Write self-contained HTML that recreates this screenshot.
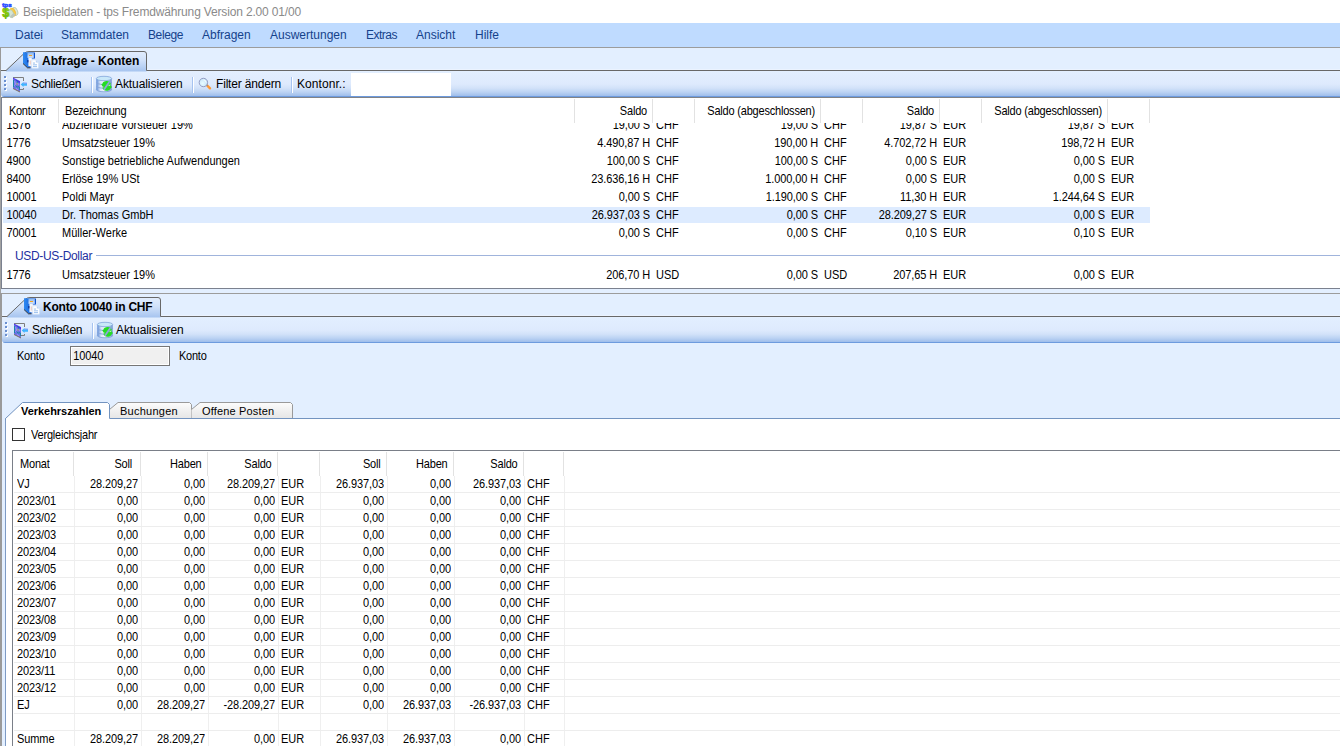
<!DOCTYPE html><html lang="de"><head><meta charset="utf-8"><title>Beispieldaten - tps Fremdwährung</title><style>
html,body{margin:0;padding:0}
body{width:1340px;height:746px;overflow:hidden;background:#fff;position:relative;font-family:"Liberation Sans",sans-serif;font-size:11px;color:#000}
div,span{position:absolute;white-space:nowrap;box-sizing:border-box}
svg{position:absolute;overflow:visible}
.t{line-height:14px;height:14px;transform-origin:0 11px;transform:scaleY(1.13)}
.ui{font-size:12px;line-height:16px;height:16px}
.tl{line-height:14px;height:14px}
.r{text-align:right}
.n{letter-spacing:-0.1px}
.menu{color:#15428b;font-size:12px;line-height:16px;top:27px}
.hs{width:1px;background:#e2e2e2}
.vl{width:1px;background:#efefef}
.hl{height:1px;background:#ededed}
.tsep{width:2px;height:16px;border-left:1px solid #a6c3f0;border-right:1px solid #fff}
</style></head><body>
<div class="ui" style="left:23px;top:4px;color:#8a8a8a;font-size:12px;letter-spacing:-0.16px">Beispieldaten - tps Fremdwährung Version 2.00 01/00</div>
<svg style="left:2px;top:2px" width="20" height="20" viewBox="0 0 20 20"><defs><linearGradient id="dg" x1="0" y1="0" x2="0" y2="1"><stop offset="0" stop-color="#b4ec10"/><stop offset="0.6" stop-color="#86cc06"/><stop offset="1" stop-color="#5aa408"/></linearGradient></defs><ellipse cx="12.800" cy="9.500" rx="2.800" ry="4.200" fill="#dfe9dc" stroke="#b4c8b2" stroke-width="0.8" transform="rotate(-20 12.8 9.5)"/><ellipse cx="10.600" cy="10.300" rx="2.800" ry="4.300" fill="#f7cb45" stroke="#eeb22e" stroke-width="0.6" transform="rotate(-20 10.6 10.3)"/><ellipse cx="9" cy="11.800" rx="2.600" ry="4.200" fill="#d3e4d3" stroke="#b0c8b0" stroke-width="0.6" transform="rotate(-20 9 11.8)"/><path d="M8 14.500 L10.500 16 L13.500 12.500 L11.500 11 Z" fill="#bcc6bc"/><text x="0.300" y="15.200" font-family="Liberation Sans, sans-serif" font-weight="bold" font-size="12.4" fill="url(#dg)" stroke="#78bc08" stroke-width="0.8">$</text><text x="0.300" y="4.600" font-family="Liberation Sans, sans-serif" font-weight="bold" font-size="6.2" fill="#2f55ff" stroke="#2f55ff" stroke-width="0.7">tps</text></svg>
<div style="left:0;top:23px;width:1340px;height:24px;background:#bfdbff"></div>
<div class="menu" style="left:15px;letter-spacing:0px">Datei</div>
<div class="menu" style="left:61px;letter-spacing:0px">Stammdaten</div>
<div class="menu" style="left:148px;letter-spacing:-0.38px">Belege</div>
<div class="menu" style="left:202px;letter-spacing:0px">Abfragen</div>
<div class="menu" style="left:270px;letter-spacing:0px">Auswertungen</div>
<div class="menu" style="left:366px;letter-spacing:-0.52px">Extras</div>
<div class="menu" style="left:416px;letter-spacing:0px">Ansicht</div>
<div class="menu" style="left:475px;letter-spacing:0px">Hilfe</div>
<div style="left:0;top:47px;width:1340px;height:1px;background:#9c9c9c"></div>
<div style="left:0;top:48px;width:1340px;height:22px;background:#e3efff"></div>
<div style="left:0;top:69px;width:1340px;height:1px;background:#ebf3ff"></div>
<div style="left:0;top:70px;width:1340px;height:1px;background:#686868"></div>
<div style="left:0;top:47px;width:1px;height:50px;background:#9a9a9a"></div>
<div style="left:1px;top:71px;width:1339px;height:26px;border-radius:0 0 0 3px;background:linear-gradient(#e3efff 0,#deeafd 50%,#d2e2f9 66%,#bcd3f3 81%,#a6c3ed 92%,#9fbeeb 96%,#6d9bde 96.2%,#6d9bde 100%)"></div>
<svg style="left:5px;top:51px" width="144" height="20" viewBox="0 0 144 20"><defs><linearGradient id="tg47" x1="0" y1="0" x2="0" y2="1"><stop offset="0" stop-color="#e2edfd"/><stop offset="0.45" stop-color="#d0e1fa"/><stop offset="1" stop-color="#a6c4ef"/></linearGradient></defs><path d="M1 19.5 L19 2.5 Q21 0.5 24 0.5 L139 0.5 Q141.5 0.5 141.5 3 L141.5 20.5 L1 20.5 Z" fill="url(#tg47)"/><path d="M1 19.5 L19 2.5 Q21 0.5 24 0.5 L139 0.5 Q141.5 0.5 141.5 3 L141.5 19.5" fill="none" stroke="#686868" stroke-width="1"/></svg>
<div class="ui" style="left:42px;top:53px;font-weight:bold;font-size:12px;letter-spacing:0px">Abfrage - Konten</div>
<svg style="left:23px;top:52px" width="17" height="17" viewBox="0 0 17 17"><defs><linearGradient id="cb47" x1="0" y1="0" x2="1" y2="0"><stop offset="0" stop-color="#2f8af2"/><stop offset="1" stop-color="#0b4fcf"/></linearGradient><linearGradient id="cf47" x1="0" y1="0" x2="0" y2="1"><stop offset="0" stop-color="#8db8ee"/><stop offset="1" stop-color="#dde9fb"/></linearGradient></defs><path d="M0 0.2 L12 0.5 L12 6.5 L7.5 6.5 L7.5 15.8 L4.5 15.8 L0 11.5 Z" fill="url(#cb47)"/><path d="M0 11.5 L4.5 15.8 L7.5 15.8" fill="none" stroke="#3a3a3a" stroke-width="1"/><rect x="4.5" y="0.8" width="6.3" height="5" fill="url(#cf47)"/><rect x="6" y="3" width="3" height="1" fill="#f2a324"/><rect x="5.4" y="5.8" width="3.4" height="8.4" fill="#f4f6fb"/><rect x="4.3" y="8" width="1.1" height="2.4" fill="#0a2a8a"/><rect x="6.8" y="8.5" width="1" height="4" fill="#ecc8bc"/><path d="M8.900 8 L12.800 8 L15.400 10.600 L15.400 16.200 L8.900 16.200 Z" fill="#fff" stroke="#d3e2f7" stroke-width="0.5"/><path d="M12.8 8 L12.8 10.5 L15.3 10.5 Z" fill="#b9d2f3"/><rect x="10" y="10.6" width="2" height="0.9" fill="#8fb8ec"/><rect x="10" y="12.4" width="4" height="0.9" fill="#8fb8ec"/><rect x="10" y="14.2" width="4" height="0.9" fill="#8fb8ec"/></svg>
<svg style="left:12px;top:76px" width="16" height="17" viewBox="0 0 16 17"><path d="M1 1.500 L11.500 1.500 L11.500 5 M11.500 12 L11.500 13.5 L8 13.5" fill="none" stroke="#7d7d7d" stroke-width="1"/><path d="M1 1.500 L8 5 L8 16 L1 12.5 Z" fill="#6a72e4"/><path d="M1 2 L8 5.500 L8 7 L5 5.500 L3 3.500 L1 3 Z" fill="#4a20f0"/><path d="M1.500 4 L1.500 11 M3 9 L5 11 L5 13 M5 4.500 L6 7 M5.500 10.500 L7.500 11 L7.500 14" fill="none" stroke="#0a8a9a" stroke-width="1" opacity="0.8"/><path d="M2.500 5 L3.500 8 L2.500 10 M6 7.500 L7 9 M4 12 L6 14" fill="none" stroke="#a08cff" stroke-width="1.2" opacity="0.9"/><rect x="4.300" y="7" width="1.400" height="1.600" fill="#b0a878"/><path d="M1 12.500 L8 16" fill="none" stroke="#7a6a50" stroke-width="0.9"/><path d="M8.700 8.500 L11.500 6 L11.500 7.400 L15 7.400 L15 9.700 L11.500 9.700 L11.500 11 Z" fill="#3fb4ff"/><path d="M11.500 7 L15 7.200" stroke="#5a7cf0" stroke-width="0.8"/></svg>
<svg style="left:96px;top:76px" width="17" height="17" viewBox="0 0 17 17"><defs><linearGradient id="cy47" x1="0" y1="0" x2="1" y2="0"><stop offset="0" stop-color="#5a8ad6"/><stop offset="0.25" stop-color="#d9e5f8"/><stop offset="0.5" stop-color="#eef3fc"/><stop offset="0.78" stop-color="#b4c9ec"/><stop offset="1" stop-color="#6a90d0"/></linearGradient></defs><path d="M0.300 2.500 L0.300 13.500 A7.700 2.300 0 0 0 15.700 13.500 L15.700 2.500 Z" fill="url(#cy47)"/><path d="M0.300 6.300 A7.700 2.200 0 0 0 15.700 6.300 M0.300 10 A7.700 2.200 0 0 0 15.700 10 M0.300 13.500 A7.700 2.300 0 0 0 15.700 13.500" fill="none" stroke="#86a4d8" stroke-width="0.9"/><ellipse cx="8" cy="2.500" rx="7.700" ry="2.200" fill="#c9e8f9" stroke="#83a6da" stroke-width="0.8"/><circle cx="10.600" cy="9.900" r="3" fill="#30d830"/><path d="M7.500 9.600 A3.100 3.100 0 0 1 13.600 8.900" fill="none" stroke="#25dc25" stroke-width="3"/><path d="M13.700 10.300 A3.100 3.100 0 0 1 7.700 11.300" fill="none" stroke="#25dc25" stroke-width="3"/><path d="M5.200 8.200 L9.200 7.600 L7.300 11.600 Z M16 11.600 L12 12.200 L13.900 8.200 Z" fill="#25dc25"/><path d="M7.900 13.700 L13.300 6.100" stroke="#8ca8da" stroke-width="1.800"/><path d="M12.600 9.600 L14.300 9" stroke="#dcfad4" stroke-width="0.9"/></svg>
<div style="left:4px;top:76px;width:2px;height:2px;background:#6a8fd0"></div>
<div style="left:5px;top:77px;width:2px;height:2px;background:#fff"></div>
<div style="left:5px;top:77px;width:1px;height:1px;background:#6a8fd0"></div>
<div style="left:4px;top:80px;width:2px;height:2px;background:#6a8fd0"></div>
<div style="left:5px;top:81px;width:2px;height:2px;background:#fff"></div>
<div style="left:5px;top:81px;width:1px;height:1px;background:#6a8fd0"></div>
<div style="left:4px;top:84px;width:2px;height:2px;background:#6a8fd0"></div>
<div style="left:5px;top:85px;width:2px;height:2px;background:#fff"></div>
<div style="left:5px;top:85px;width:1px;height:1px;background:#6a8fd0"></div>
<div style="left:4px;top:88px;width:2px;height:2px;background:#6a8fd0"></div>
<div style="left:5px;top:89px;width:2px;height:2px;background:#fff"></div>
<div style="left:5px;top:89px;width:1px;height:1px;background:#6a8fd0"></div>
<div class="ui" style="left:31px;top:76px;font-size:12px;letter-spacing:-0.36px">Schließen</div>
<div class="tsep" style="left:91px;top:77px"></div>
<div class="ui" style="left:115px;top:76px;font-size:12px;letter-spacing:-0.08px">Aktualisieren</div>
<svg style="left:198px;top:77px" width="15" height="14" viewBox="0 0 15 14"><defs><radialGradient id="lens" cx="0.4" cy="0.6" r="0.7"><stop offset="0" stop-color="#e8fbff"/><stop offset="1" stop-color="#bfe0f8"/></radialGradient></defs><path d="M9.300 8.600 L12 11.300" stroke="#ff9a36" stroke-width="2.400" stroke-linecap="round"/><path d="M8 7.300 L9.500 8.800" stroke="#8a8a90" stroke-width="1.300"/><circle cx="5.400" cy="5.500" r="4.200" fill="url(#lens)" stroke="#8c94bc" stroke-width="0.9"/><path d="M5.500 2.800 Q8 3 8 5.500" fill="none" stroke="#fff" stroke-width="1" opacity="0.8"/></svg>
<div class="tsep" style="left:192px;top:77px"></div>
<div class="ui" style="left:216px;top:76px;font-size:12px;letter-spacing:-0.18px">Filter ändern</div>
<div class="tsep" style="left:291px;top:77px"></div>
<div class="ui" style="left:297px;top:76px;font-size:12px;letter-spacing:0.07px">Kontonr.:</div>
<div style="left:351px;top:73px;width:100px;height:23px;background:#fff"></div>
<div style="left:0;top:97px;width:1340px;height:1px;background:#808286"></div>
<div style="left:0;top:97px;width:1px;height:196px;background:#a2a2a2"></div>
<div style="left:1px;top:97px;width:1px;height:192px;background:#7b818f"></div>
<div style="left:1px;top:288px;width:1339px;height:1px;background:#7b818f"></div>
<div style="left:1px;top:289px;width:1339px;height:4px;background:#e3efff"></div>
<div style="left:3px;top:207px;width:1147px;height:16px;background:#ddebff"></div>
<div class="t n" style="left:6.5px;top:118px">1576</div>
<div class="t" style="left:62px;top:118px">Abziehbare Vorsteuer 19%</div>
<div class="t r n" style="left:560px;width:90px;top:118px">19,00 S</div>
<div class="t" style="left:656px;top:118px">CHF</div>
<div class="t r n" style="left:728px;width:90px;top:118px">19,00 S</div>
<div class="t" style="left:824px;top:118px">CHF</div>
<div class="t r n" style="left:847px;width:90px;top:118px">19,87 S</div>
<div class="t" style="left:943px;top:118px">EUR</div>
<div class="t r n" style="left:1015px;width:90px;top:118px">19,87 S</div>
<div class="t" style="left:1111px;top:118px">EUR</div>
<div class="t n" style="left:6.5px;top:136px">1776</div>
<div class="t" style="left:62px;top:136px">Umsatzsteuer 19%</div>
<div class="t r n" style="left:560px;width:90px;top:136px">4.490,87 H</div>
<div class="t" style="left:656px;top:136px">CHF</div>
<div class="t r n" style="left:728px;width:90px;top:136px">190,00 H</div>
<div class="t" style="left:824px;top:136px">CHF</div>
<div class="t r n" style="left:847px;width:90px;top:136px">4.702,72 H</div>
<div class="t" style="left:943px;top:136px">EUR</div>
<div class="t r n" style="left:1015px;width:90px;top:136px">198,72 H</div>
<div class="t" style="left:1111px;top:136px">EUR</div>
<div class="t n" style="left:6.5px;top:154px">4900</div>
<div class="t" style="left:62px;top:154px">Sonstige betriebliche Aufwendungen</div>
<div class="t r n" style="left:560px;width:90px;top:154px">100,00 S</div>
<div class="t" style="left:656px;top:154px">CHF</div>
<div class="t r n" style="left:728px;width:90px;top:154px">100,00 S</div>
<div class="t" style="left:824px;top:154px">CHF</div>
<div class="t r n" style="left:847px;width:90px;top:154px">0,00 S</div>
<div class="t" style="left:943px;top:154px">EUR</div>
<div class="t r n" style="left:1015px;width:90px;top:154px">0,00 S</div>
<div class="t" style="left:1111px;top:154px">EUR</div>
<div class="t n" style="left:6.5px;top:172px">8400</div>
<div class="t" style="left:62px;top:172px">Erlöse 19% USt</div>
<div class="t r n" style="left:560px;width:90px;top:172px">23.636,16 H</div>
<div class="t" style="left:656px;top:172px">CHF</div>
<div class="t r n" style="left:728px;width:90px;top:172px">1.000,00 H</div>
<div class="t" style="left:824px;top:172px">CHF</div>
<div class="t r n" style="left:847px;width:90px;top:172px">0,00 S</div>
<div class="t" style="left:943px;top:172px">EUR</div>
<div class="t r n" style="left:1015px;width:90px;top:172px">0,00 S</div>
<div class="t" style="left:1111px;top:172px">EUR</div>
<div class="t n" style="left:6.5px;top:190px">10001</div>
<div class="t" style="left:62px;top:190px">Poldi Mayr</div>
<div class="t r n" style="left:560px;width:90px;top:190px">0,00 S</div>
<div class="t" style="left:656px;top:190px">CHF</div>
<div class="t r n" style="left:728px;width:90px;top:190px">1.190,00 S</div>
<div class="t" style="left:824px;top:190px">CHF</div>
<div class="t r n" style="left:847px;width:90px;top:190px">11,30 H</div>
<div class="t" style="left:943px;top:190px">EUR</div>
<div class="t r n" style="left:1015px;width:90px;top:190px">1.244,64 S</div>
<div class="t" style="left:1111px;top:190px">EUR</div>
<div class="t n" style="left:6.5px;top:208px">10040</div>
<div class="t" style="left:62px;top:208px">Dr. Thomas GmbH</div>
<div class="t r n" style="left:560px;width:90px;top:208px">26.937,03 S</div>
<div class="t" style="left:656px;top:208px">CHF</div>
<div class="t r n" style="left:728px;width:90px;top:208px">0,00 S</div>
<div class="t" style="left:824px;top:208px">CHF</div>
<div class="t r n" style="left:847px;width:90px;top:208px">28.209,27 S</div>
<div class="t" style="left:943px;top:208px">EUR</div>
<div class="t r n" style="left:1015px;width:90px;top:208px">0,00 S</div>
<div class="t" style="left:1111px;top:208px">EUR</div>
<div class="t n" style="left:6.5px;top:226px">70001</div>
<div class="t" style="left:62px;top:226px">Müller-Werke</div>
<div class="t r n" style="left:560px;width:90px;top:226px">0,00 S</div>
<div class="t" style="left:656px;top:226px">CHF</div>
<div class="t r n" style="left:728px;width:90px;top:226px">0,00 S</div>
<div class="t" style="left:824px;top:226px">CHF</div>
<div class="t r n" style="left:847px;width:90px;top:226px">0,10 S</div>
<div class="t" style="left:943px;top:226px">EUR</div>
<div class="t r n" style="left:1015px;width:90px;top:226px">0,10 S</div>
<div class="t" style="left:1111px;top:226px">EUR</div>
<div style="left:2px;top:98px;width:1338px;height:25px;background:#fff"></div>
<div class="hs" style="left:58px;top:99px;height:24px"></div>
<div class="hs" style="left:574px;top:99px;height:24px"></div>
<div class="hs" style="left:652px;top:99px;height:24px"></div>
<div class="hs" style="left:694px;top:99px;height:24px"></div>
<div class="hs" style="left:820px;top:99px;height:24px"></div>
<div class="hs" style="left:862px;top:99px;height:24px"></div>
<div class="hs" style="left:939px;top:99px;height:24px"></div>
<div class="hs" style="left:981px;top:99px;height:24px"></div>
<div class="hs" style="left:1107px;top:99px;height:24px"></div>
<div class="hs" style="left:1149px;top:99px;height:24px"></div>
<div class="t" style="left:9px;top:104px;letter-spacing:-0.3px">Kontonr</div>
<div class="t" style="left:65px;top:104px;letter-spacing:-0.2px">Bezeichnung</div>
<div class="t r" style="left:527px;width:120px;top:104px;letter-spacing:-0.2px">Saldo</div>
<div class="t r" style="left:695px;width:120px;top:104px;letter-spacing:-0.2px">Saldo (abgeschlossen)</div>
<div class="t r" style="left:814px;width:120px;top:104px;letter-spacing:-0.2px">Saldo</div>
<div class="t r" style="left:982px;width:120px;top:104px;letter-spacing:-0.2px">Saldo (abgeschlossen)</div>
<div class="ui" style="left:15px;top:248px;color:#1e30a0;font-size:12px;letter-spacing:-0.33px">USD-US-Dollar</div>
<div style="left:96px;top:255px;width:1244px;height:1px;background:#a0b4dc"></div>
<div class="t n" style="left:6.5px;top:268px">1776</div>
<div class="t" style="left:62px;top:268px">Umsatzsteuer 19%</div>
<div class="t r n" style="left:560px;width:90px;top:268px">206,70 H</div>
<div class="t" style="left:656px;top:268px">USD</div>
<div class="t r n" style="left:728px;width:90px;top:268px">0,00 S</div>
<div class="t" style="left:824px;top:268px">USD</div>
<div class="t r n" style="left:847px;width:90px;top:268px">207,65 H</div>
<div class="t" style="left:943px;top:268px">EUR</div>
<div class="t r n" style="left:1015px;width:90px;top:268px">0,00 S</div>
<div class="t" style="left:1111px;top:268px">EUR</div>
<div style="left:0;top:293px;width:1340px;height:1px;background:#9c9c9c"></div>
<div style="left:0;top:294px;width:1340px;height:22px;background:#e3efff"></div>
<div style="left:0;top:315px;width:1340px;height:1px;background:#ebf3ff"></div>
<div style="left:0;top:316px;width:1340px;height:1px;background:#686868"></div>
<div style="left:0;top:293px;width:2px;height:50px;background:#9a9a9a"></div>
<div style="left:2px;top:317px;width:1339px;height:26px;border-radius:0 0 0 3px;background:linear-gradient(#e3efff 0,#deeafd 50%,#d2e2f9 66%,#bcd3f3 81%,#a6c3ed 92%,#9fbeeb 96%,#6d9bde 96.2%,#6d9bde 100%)"></div>
<svg style="left:6px;top:297px" width="157" height="20" viewBox="0 0 157 20"><defs><linearGradient id="tg293" x1="0" y1="0" x2="0" y2="1"><stop offset="0" stop-color="#e2edfd"/><stop offset="0.45" stop-color="#d0e1fa"/><stop offset="1" stop-color="#a6c4ef"/></linearGradient></defs><path d="M1 19.5 L19 2.5 Q21 0.5 24 0.5 L152 0.5 Q154.5 0.5 154.5 3 L154.5 20.5 L1 20.5 Z" fill="url(#tg293)"/><path d="M1 19.5 L19 2.5 Q21 0.5 24 0.5 L152 0.5 Q154.5 0.5 154.5 3 L154.5 19.5" fill="none" stroke="#686868" stroke-width="1"/></svg>
<div class="ui" style="left:43px;top:299px;font-weight:bold;font-size:12px;letter-spacing:-0.22px">Konto 10040 in CHF</div>
<svg style="left:24px;top:298px" width="17" height="17" viewBox="0 0 17 17"><defs><linearGradient id="cb293" x1="0" y1="0" x2="1" y2="0"><stop offset="0" stop-color="#2f8af2"/><stop offset="1" stop-color="#0b4fcf"/></linearGradient><linearGradient id="cf293" x1="0" y1="0" x2="0" y2="1"><stop offset="0" stop-color="#8db8ee"/><stop offset="1" stop-color="#dde9fb"/></linearGradient></defs><path d="M0 0.2 L12 0.5 L12 6.5 L7.5 6.5 L7.5 15.8 L4.5 15.8 L0 11.5 Z" fill="url(#cb293)"/><path d="M0 11.5 L4.5 15.8 L7.5 15.8" fill="none" stroke="#3a3a3a" stroke-width="1"/><rect x="4.5" y="0.8" width="6.3" height="5" fill="url(#cf293)"/><rect x="6" y="3" width="3" height="1" fill="#f2a324"/><rect x="5.4" y="5.8" width="3.4" height="8.4" fill="#f4f6fb"/><rect x="4.3" y="8" width="1.1" height="2.4" fill="#0a2a8a"/><rect x="6.8" y="8.5" width="1" height="4" fill="#ecc8bc"/><path d="M8.900 8 L12.800 8 L15.400 10.600 L15.400 16.200 L8.900 16.200 Z" fill="#fff" stroke="#d3e2f7" stroke-width="0.5"/><path d="M12.8 8 L12.8 10.5 L15.3 10.5 Z" fill="#b9d2f3"/><rect x="10" y="10.6" width="2" height="0.9" fill="#8fb8ec"/><rect x="10" y="12.4" width="4" height="0.9" fill="#8fb8ec"/><rect x="10" y="14.2" width="4" height="0.9" fill="#8fb8ec"/></svg>
<svg style="left:13px;top:322px" width="16" height="17" viewBox="0 0 16 17"><path d="M1 1.500 L11.500 1.500 L11.500 5 M11.500 12 L11.500 13.5 L8 13.5" fill="none" stroke="#7d7d7d" stroke-width="1"/><path d="M1 1.500 L8 5 L8 16 L1 12.5 Z" fill="#6a72e4"/><path d="M1 2 L8 5.500 L8 7 L5 5.500 L3 3.500 L1 3 Z" fill="#4a20f0"/><path d="M1.500 4 L1.500 11 M3 9 L5 11 L5 13 M5 4.500 L6 7 M5.500 10.500 L7.500 11 L7.500 14" fill="none" stroke="#0a8a9a" stroke-width="1" opacity="0.8"/><path d="M2.500 5 L3.500 8 L2.500 10 M6 7.500 L7 9 M4 12 L6 14" fill="none" stroke="#a08cff" stroke-width="1.2" opacity="0.9"/><rect x="4.300" y="7" width="1.400" height="1.600" fill="#b0a878"/><path d="M1 12.500 L8 16" fill="none" stroke="#7a6a50" stroke-width="0.9"/><path d="M8.700 8.500 L11.500 6 L11.500 7.400 L15 7.400 L15 9.700 L11.500 9.700 L11.500 11 Z" fill="#3fb4ff"/><path d="M11.500 7 L15 7.200" stroke="#5a7cf0" stroke-width="0.8"/></svg>
<svg style="left:97px;top:322px" width="17" height="17" viewBox="0 0 17 17"><defs><linearGradient id="cy293" x1="0" y1="0" x2="1" y2="0"><stop offset="0" stop-color="#5a8ad6"/><stop offset="0.25" stop-color="#d9e5f8"/><stop offset="0.5" stop-color="#eef3fc"/><stop offset="0.78" stop-color="#b4c9ec"/><stop offset="1" stop-color="#6a90d0"/></linearGradient></defs><path d="M0.300 2.500 L0.300 13.500 A7.700 2.300 0 0 0 15.700 13.500 L15.700 2.500 Z" fill="url(#cy293)"/><path d="M0.300 6.300 A7.700 2.200 0 0 0 15.700 6.300 M0.300 10 A7.700 2.200 0 0 0 15.700 10 M0.300 13.500 A7.700 2.300 0 0 0 15.700 13.500" fill="none" stroke="#86a4d8" stroke-width="0.9"/><ellipse cx="8" cy="2.500" rx="7.700" ry="2.200" fill="#c9e8f9" stroke="#83a6da" stroke-width="0.8"/><circle cx="10.600" cy="9.900" r="3" fill="#30d830"/><path d="M7.500 9.600 A3.100 3.100 0 0 1 13.600 8.900" fill="none" stroke="#25dc25" stroke-width="3"/><path d="M13.700 10.300 A3.100 3.100 0 0 1 7.700 11.300" fill="none" stroke="#25dc25" stroke-width="3"/><path d="M5.200 8.200 L9.200 7.600 L7.300 11.600 Z M16 11.600 L12 12.200 L13.900 8.200 Z" fill="#25dc25"/><path d="M7.900 13.700 L13.300 6.100" stroke="#8ca8da" stroke-width="1.800"/><path d="M12.600 9.600 L14.300 9" stroke="#dcfad4" stroke-width="0.9"/></svg>
<div style="left:5px;top:322px;width:2px;height:2px;background:#6a8fd0"></div>
<div style="left:6px;top:323px;width:2px;height:2px;background:#fff"></div>
<div style="left:6px;top:323px;width:1px;height:1px;background:#6a8fd0"></div>
<div style="left:5px;top:326px;width:2px;height:2px;background:#6a8fd0"></div>
<div style="left:6px;top:327px;width:2px;height:2px;background:#fff"></div>
<div style="left:6px;top:327px;width:1px;height:1px;background:#6a8fd0"></div>
<div style="left:5px;top:330px;width:2px;height:2px;background:#6a8fd0"></div>
<div style="left:6px;top:331px;width:2px;height:2px;background:#fff"></div>
<div style="left:6px;top:331px;width:1px;height:1px;background:#6a8fd0"></div>
<div style="left:5px;top:334px;width:2px;height:2px;background:#6a8fd0"></div>
<div style="left:6px;top:335px;width:2px;height:2px;background:#fff"></div>
<div style="left:6px;top:335px;width:1px;height:1px;background:#6a8fd0"></div>
<div class="ui" style="left:32px;top:322px;font-size:12px;letter-spacing:-0.36px">Schließen</div>
<div class="tsep" style="left:92px;top:323px"></div>
<div class="ui" style="left:116px;top:322px;font-size:12px;letter-spacing:-0.08px">Aktualisieren</div>
<div style="left:0;top:317px;width:2px;height:429px;background:#9a9a9a"></div>
<div style="left:2px;top:343px;width:1338px;height:403px;background:#e3efff"></div>
<div class="t" style="left:17px;top:349px;letter-spacing:-0.25px">Konto</div>
<div style="left:70px;top:346px;width:100px;height:20px;background:#f0f0f0;border:1px solid #767676;box-shadow:inset 0 0 0 1px #fff"></div>
<div class="t" style="left:73.3px;top:349px;letter-spacing:-0.1px">10040</div>
<div class="t" style="left:179px;top:349px;letter-spacing:-0.25px">Konto</div>
<div style="left:5px;top:418px;width:1335px;height:328px;background:#fff;border-left:1px solid #7d9ac4;border-top:1px solid #7394c0"></div>
<svg style="left:5px;top:401px" width="290" height="19" viewBox="0 0 290 19"><defs><linearGradient id="ig" x1="0" y1="0" x2="0" y2="1"><stop offset="0" stop-color="#fcfcfc"/><stop offset="1" stop-color="#e6e6e6"/></linearGradient></defs><path d="M104.5 17 L104.5 8.500 L113 1.500 L184.5 1.500 L186.5 3.500 L186.5 17 Z" fill="url(#ig)"/><path d="M104.5 8.500 L113 1.500 L184.5 1.500 L186.5 3.500 L186.5 17" fill="none" stroke="#9a9a9a"/><path d="M186.5 17 L186.5 8.500 L195 1.500 L285.5 1.500 L287.5 3.500 L287.5 17 Z" fill="url(#ig)"/><path d="M186.5 8.500 L195 1.500 L285.5 1.500 L287.5 3.500 L287.5 17" fill="none" stroke="#9a9a9a"/><path d="M0.5 19 L0.5 17.5 L17.5 1.500 L102.5 1.500 L104.5 3.500 L104.5 19 Z" fill="#fff"/><path d="M0.5 19 L0.5 17.5 L17.5 1.500 L102.5 1.500 L104.5 3.500 L104.5 17.5" fill="none" stroke="#7394c0"/></svg>
<div class="tl" style="left:21px;top:404px;font-weight:bold;font-size:11px;letter-spacing:-0.04px">Verkehrszahlen</div>
<div class="tl" style="left:120px;top:404px;font-size:11px;letter-spacing:0.26px">Buchungen</div>
<div class="tl" style="left:202px;top:404px;font-size:11px;letter-spacing:0.17px">Offene Posten</div>
<div style="left:12px;top:428px;width:13px;height:13px;background:#fff;border:1px solid #333"></div>
<div class="t" style="left:31px;top:428px;letter-spacing:-0.2px">Vergleichsjahr</div>
<div style="left:12px;top:450px;width:1328px;height:296px;background:#fff;border-left:1px solid #7a7f88;border-top:1px solid #7a7f88"></div>
<div class="hs" style="left:73px;top:452px;height:24px"></div>
<div class="vl" style="left:74px;top:476px;height:270px"></div>
<div class="hs" style="left:140px;top:452px;height:24px"></div>
<div class="vl" style="left:141px;top:476px;height:270px"></div>
<div class="hs" style="left:207px;top:452px;height:24px"></div>
<div class="vl" style="left:208px;top:476px;height:270px"></div>
<div class="hs" style="left:277px;top:452px;height:24px"></div>
<div class="vl" style="left:278px;top:476px;height:270px"></div>
<div class="hs" style="left:319px;top:452px;height:24px"></div>
<div class="vl" style="left:320px;top:476px;height:270px"></div>
<div class="hs" style="left:386px;top:452px;height:24px"></div>
<div class="vl" style="left:387px;top:476px;height:270px"></div>
<div class="hs" style="left:453px;top:452px;height:24px"></div>
<div class="vl" style="left:454px;top:476px;height:270px"></div>
<div class="hs" style="left:523px;top:452px;height:24px"></div>
<div class="vl" style="left:524px;top:476px;height:270px"></div>
<div class="hs" style="left:563px;top:452px;height:24px"></div>
<div class="vl" style="left:564px;top:476px;height:270px"></div>
<div class="hl" style="left:14px;top:492px;width:1326px"></div>
<div class="hl" style="left:14px;top:509px;width:1326px"></div>
<div class="hl" style="left:14px;top:526px;width:1326px"></div>
<div class="hl" style="left:14px;top:543px;width:1326px"></div>
<div class="hl" style="left:14px;top:560px;width:1326px"></div>
<div class="hl" style="left:14px;top:577px;width:1326px"></div>
<div class="hl" style="left:14px;top:594px;width:1326px"></div>
<div class="hl" style="left:14px;top:611px;width:1326px"></div>
<div class="hl" style="left:14px;top:628px;width:1326px"></div>
<div class="hl" style="left:14px;top:645px;width:1326px"></div>
<div class="hl" style="left:14px;top:662px;width:1326px"></div>
<div class="hl" style="left:14px;top:679px;width:1326px"></div>
<div class="hl" style="left:14px;top:696px;width:1326px"></div>
<div class="hl" style="left:14px;top:713px;width:1326px"></div>
<div class="hl" style="left:14px;top:730px;width:1326px"></div>
<div class="t" style="left:20px;top:457px;letter-spacing:-0.2px">Monat</div>
<div class="t r" style="left:72px;width:60px;top:457px;letter-spacing:-0.2px">Soll</div>
<div class="t r" style="left:141.5px;width:60px;top:457px;letter-spacing:-0.2px">Haben</div>
<div class="t r" style="left:211.5px;width:60px;top:457px;letter-spacing:-0.2px">Saldo</div>
<div class="t r" style="left:320.5px;width:60px;top:457px;letter-spacing:-0.2px">Soll</div>
<div class="t r" style="left:387.5px;width:60px;top:457px;letter-spacing:-0.2px">Haben</div>
<div class="t r" style="left:457.5px;width:60px;top:457px;letter-spacing:-0.2px">Saldo</div>
<div class="t n" style="left:17px;top:477px">VJ</div>
<div class="t r n" style="left:68px;width:70px;top:477px">28.209,27</div>
<div class="t r n" style="left:135px;width:70px;top:477px">0,00</div>
<div class="t r n" style="left:205px;width:70px;top:477px">28.209,27</div>
<div class="t r n" style="left:314px;width:70px;top:477px">26.937,03</div>
<div class="t r n" style="left:381px;width:70px;top:477px">0,00</div>
<div class="t r n" style="left:451px;width:70px;top:477px">26.937,03</div>
<div class="t" style="left:281px;top:477px">EUR</div>
<div class="t" style="left:527px;top:477px">CHF</div>
<div class="t n" style="left:17px;top:494px">2023/01</div>
<div class="t r n" style="left:68px;width:70px;top:494px">0,00</div>
<div class="t r n" style="left:135px;width:70px;top:494px">0,00</div>
<div class="t r n" style="left:205px;width:70px;top:494px">0,00</div>
<div class="t r n" style="left:314px;width:70px;top:494px">0,00</div>
<div class="t r n" style="left:381px;width:70px;top:494px">0,00</div>
<div class="t r n" style="left:451px;width:70px;top:494px">0,00</div>
<div class="t" style="left:281px;top:494px">EUR</div>
<div class="t" style="left:527px;top:494px">CHF</div>
<div class="t n" style="left:17px;top:511px">2023/02</div>
<div class="t r n" style="left:68px;width:70px;top:511px">0,00</div>
<div class="t r n" style="left:135px;width:70px;top:511px">0,00</div>
<div class="t r n" style="left:205px;width:70px;top:511px">0,00</div>
<div class="t r n" style="left:314px;width:70px;top:511px">0,00</div>
<div class="t r n" style="left:381px;width:70px;top:511px">0,00</div>
<div class="t r n" style="left:451px;width:70px;top:511px">0,00</div>
<div class="t" style="left:281px;top:511px">EUR</div>
<div class="t" style="left:527px;top:511px">CHF</div>
<div class="t n" style="left:17px;top:528px">2023/03</div>
<div class="t r n" style="left:68px;width:70px;top:528px">0,00</div>
<div class="t r n" style="left:135px;width:70px;top:528px">0,00</div>
<div class="t r n" style="left:205px;width:70px;top:528px">0,00</div>
<div class="t r n" style="left:314px;width:70px;top:528px">0,00</div>
<div class="t r n" style="left:381px;width:70px;top:528px">0,00</div>
<div class="t r n" style="left:451px;width:70px;top:528px">0,00</div>
<div class="t" style="left:281px;top:528px">EUR</div>
<div class="t" style="left:527px;top:528px">CHF</div>
<div class="t n" style="left:17px;top:545px">2023/04</div>
<div class="t r n" style="left:68px;width:70px;top:545px">0,00</div>
<div class="t r n" style="left:135px;width:70px;top:545px">0,00</div>
<div class="t r n" style="left:205px;width:70px;top:545px">0,00</div>
<div class="t r n" style="left:314px;width:70px;top:545px">0,00</div>
<div class="t r n" style="left:381px;width:70px;top:545px">0,00</div>
<div class="t r n" style="left:451px;width:70px;top:545px">0,00</div>
<div class="t" style="left:281px;top:545px">EUR</div>
<div class="t" style="left:527px;top:545px">CHF</div>
<div class="t n" style="left:17px;top:562px">2023/05</div>
<div class="t r n" style="left:68px;width:70px;top:562px">0,00</div>
<div class="t r n" style="left:135px;width:70px;top:562px">0,00</div>
<div class="t r n" style="left:205px;width:70px;top:562px">0,00</div>
<div class="t r n" style="left:314px;width:70px;top:562px">0,00</div>
<div class="t r n" style="left:381px;width:70px;top:562px">0,00</div>
<div class="t r n" style="left:451px;width:70px;top:562px">0,00</div>
<div class="t" style="left:281px;top:562px">EUR</div>
<div class="t" style="left:527px;top:562px">CHF</div>
<div class="t n" style="left:17px;top:579px">2023/06</div>
<div class="t r n" style="left:68px;width:70px;top:579px">0,00</div>
<div class="t r n" style="left:135px;width:70px;top:579px">0,00</div>
<div class="t r n" style="left:205px;width:70px;top:579px">0,00</div>
<div class="t r n" style="left:314px;width:70px;top:579px">0,00</div>
<div class="t r n" style="left:381px;width:70px;top:579px">0,00</div>
<div class="t r n" style="left:451px;width:70px;top:579px">0,00</div>
<div class="t" style="left:281px;top:579px">EUR</div>
<div class="t" style="left:527px;top:579px">CHF</div>
<div class="t n" style="left:17px;top:596px">2023/07</div>
<div class="t r n" style="left:68px;width:70px;top:596px">0,00</div>
<div class="t r n" style="left:135px;width:70px;top:596px">0,00</div>
<div class="t r n" style="left:205px;width:70px;top:596px">0,00</div>
<div class="t r n" style="left:314px;width:70px;top:596px">0,00</div>
<div class="t r n" style="left:381px;width:70px;top:596px">0,00</div>
<div class="t r n" style="left:451px;width:70px;top:596px">0,00</div>
<div class="t" style="left:281px;top:596px">EUR</div>
<div class="t" style="left:527px;top:596px">CHF</div>
<div class="t n" style="left:17px;top:613px">2023/08</div>
<div class="t r n" style="left:68px;width:70px;top:613px">0,00</div>
<div class="t r n" style="left:135px;width:70px;top:613px">0,00</div>
<div class="t r n" style="left:205px;width:70px;top:613px">0,00</div>
<div class="t r n" style="left:314px;width:70px;top:613px">0,00</div>
<div class="t r n" style="left:381px;width:70px;top:613px">0,00</div>
<div class="t r n" style="left:451px;width:70px;top:613px">0,00</div>
<div class="t" style="left:281px;top:613px">EUR</div>
<div class="t" style="left:527px;top:613px">CHF</div>
<div class="t n" style="left:17px;top:630px">2023/09</div>
<div class="t r n" style="left:68px;width:70px;top:630px">0,00</div>
<div class="t r n" style="left:135px;width:70px;top:630px">0,00</div>
<div class="t r n" style="left:205px;width:70px;top:630px">0,00</div>
<div class="t r n" style="left:314px;width:70px;top:630px">0,00</div>
<div class="t r n" style="left:381px;width:70px;top:630px">0,00</div>
<div class="t r n" style="left:451px;width:70px;top:630px">0,00</div>
<div class="t" style="left:281px;top:630px">EUR</div>
<div class="t" style="left:527px;top:630px">CHF</div>
<div class="t n" style="left:17px;top:647px">2023/10</div>
<div class="t r n" style="left:68px;width:70px;top:647px">0,00</div>
<div class="t r n" style="left:135px;width:70px;top:647px">0,00</div>
<div class="t r n" style="left:205px;width:70px;top:647px">0,00</div>
<div class="t r n" style="left:314px;width:70px;top:647px">0,00</div>
<div class="t r n" style="left:381px;width:70px;top:647px">0,00</div>
<div class="t r n" style="left:451px;width:70px;top:647px">0,00</div>
<div class="t" style="left:281px;top:647px">EUR</div>
<div class="t" style="left:527px;top:647px">CHF</div>
<div class="t n" style="left:17px;top:664px">2023/11</div>
<div class="t r n" style="left:68px;width:70px;top:664px">0,00</div>
<div class="t r n" style="left:135px;width:70px;top:664px">0,00</div>
<div class="t r n" style="left:205px;width:70px;top:664px">0,00</div>
<div class="t r n" style="left:314px;width:70px;top:664px">0,00</div>
<div class="t r n" style="left:381px;width:70px;top:664px">0,00</div>
<div class="t r n" style="left:451px;width:70px;top:664px">0,00</div>
<div class="t" style="left:281px;top:664px">EUR</div>
<div class="t" style="left:527px;top:664px">CHF</div>
<div class="t n" style="left:17px;top:681px">2023/12</div>
<div class="t r n" style="left:68px;width:70px;top:681px">0,00</div>
<div class="t r n" style="left:135px;width:70px;top:681px">0,00</div>
<div class="t r n" style="left:205px;width:70px;top:681px">0,00</div>
<div class="t r n" style="left:314px;width:70px;top:681px">0,00</div>
<div class="t r n" style="left:381px;width:70px;top:681px">0,00</div>
<div class="t r n" style="left:451px;width:70px;top:681px">0,00</div>
<div class="t" style="left:281px;top:681px">EUR</div>
<div class="t" style="left:527px;top:681px">CHF</div>
<div class="t n" style="left:17px;top:698px">EJ</div>
<div class="t r n" style="left:68px;width:70px;top:698px">0,00</div>
<div class="t r n" style="left:135px;width:70px;top:698px">28.209,27</div>
<div class="t r n" style="left:205px;width:70px;top:698px">-28.209,27</div>
<div class="t r n" style="left:314px;width:70px;top:698px">0,00</div>
<div class="t r n" style="left:381px;width:70px;top:698px">26.937,03</div>
<div class="t r n" style="left:451px;width:70px;top:698px">-26.937,03</div>
<div class="t" style="left:281px;top:698px">EUR</div>
<div class="t" style="left:527px;top:698px">CHF</div>
<div class="t n" style="left:17px;top:732px">Summe</div>
<div class="t r n" style="left:68px;width:70px;top:732px">28.209,27</div>
<div class="t r n" style="left:135px;width:70px;top:732px">28.209,27</div>
<div class="t r n" style="left:205px;width:70px;top:732px">0,00</div>
<div class="t r n" style="left:314px;width:70px;top:732px">26.937,03</div>
<div class="t r n" style="left:381px;width:70px;top:732px">26.937,03</div>
<div class="t r n" style="left:451px;width:70px;top:732px">0,00</div>
<div class="t" style="left:281px;top:732px">EUR</div>
<div class="t" style="left:527px;top:732px">CHF</div>
</body></html>
